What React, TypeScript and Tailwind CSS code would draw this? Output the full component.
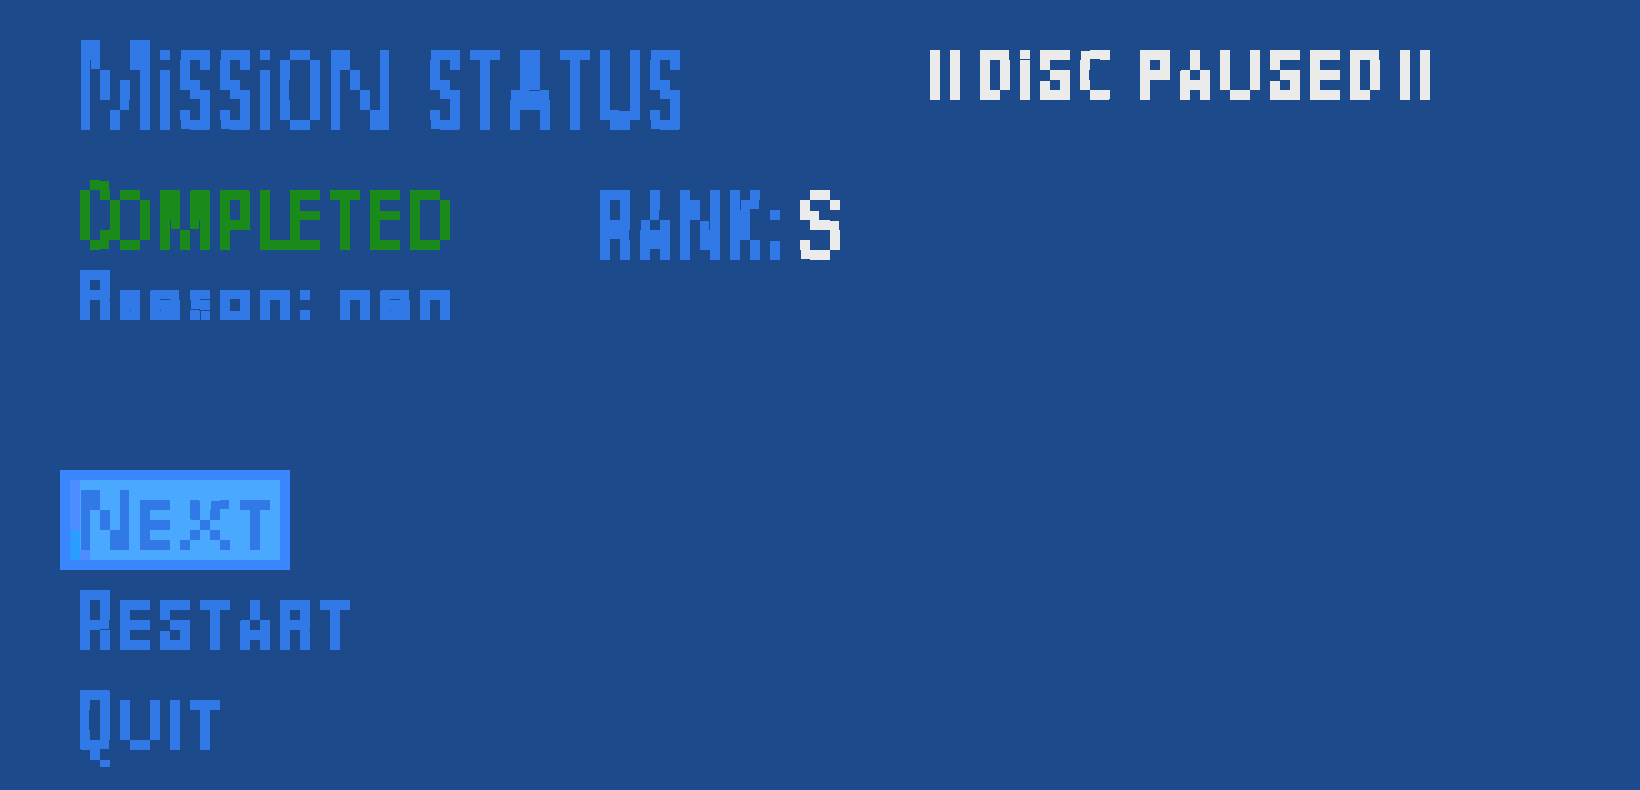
import type { ReactNode } from "react";

const font = "font-['Liberation_Sans',sans-serif] font-bold";

// one letter of the pixel font, w/h is its size on the 10px grid
function G({ c, b, s = "" }: { c: string; b: string; s?: string }) {
  return (
    <span className={`flex shrink-0 items-center justify-center whitespace-pre leading-none ${b}`}>
      <span className={`block ${s}`}>{c}</span>
    </span>
  );
}

function Row({ className, children }: { className: string; children: ReactNode }) {
  return <div className={`flex items-end gap-[10px] ${font} ${className}`}>{children}</div>;
}

function Filters() {
  const colors: [string, string][] = [
    ["px-blue", "#3279e8"],
    ["px-green", "#1a8a1a"],
    ["px-white", "#ebebeb"],
  ];
  return (
    <svg className="absolute h-0 w-0">
      {colors.map(([id, color]) => (
        <filter key={id} id={id} x="0" y="0" width="1" height="1" colorInterpolationFilters="sRGB">
          <feFlood x="4" y="4" width="2" height="2" />
          <feComposite width="10" height="10" />
          <feTile result="grid" />
          <feComposite in="SourceGraphic" in2="grid" operator="in" />
          <feMorphology operator="dilate" radius="4" />
          <feComponentTransfer result="mask">
            <feFuncA type="discrete" tableValues="0 1" />
          </feComponentTransfer>
          <feFlood floodColor={color} />
          <feComposite in2="mask" operator="in" />
        </filter>
      ))}
    </svg>
  );
}

export default function App() {
  return (
    <div className="relative flex h-[790px] w-[1640px] flex-col overflow-hidden bg-[#1d4a8b] pt-[40px]">
      <Filters />

      <div className="ml-[80px] flex items-start">
        <Row className="h-[90px] text-[112px] text-[#3279e8] [filter:url(#px-blue)]">
          <G c="M" b="h-[90px] w-[70px] text-[126px] font-normal" s="scale-x-[0.72]" />
          <G c="i" b="h-[80px] w-[10px]" s="scale-x-[0.63]" />
          <G c="S" b="h-[80px] w-[30px]" s="scale-x-[0.48]" />
          <G c="S" b="h-[80px] w-[30px]" s="scale-x-[0.48]" />
          <G c="i" b="h-[80px] w-[10px]" s="scale-x-[0.63]" />
          <G c="O" b="h-[80px] w-[40px] font-normal [-webkit-text-stroke:2px]" s="scale-x-[0.55]" />
          <G c="N" b="h-[80px] w-[60px] font-normal" s="scale-x-[0.8]" />
          <G c=" " b="h-[80px] w-[20px]" />
          <G c="S" b="h-[80px] w-[30px]" s="scale-x-[0.48]" />
          <G c="T" b="h-[80px] w-[30px]" s="scale-x-[0.53]" />
          <G c="A" b="h-[80px] w-[40px] [-webkit-text-stroke:2px]" s="scale-x-[0.56]" />
          <G c="T" b="h-[80px] w-[30px]" s="scale-x-[0.53]" />
          <G c="U" b="h-[80px] w-[40px]" s="scale-x-[0.57]" />
          <G c="S" b="h-[80px] w-[30px]" s="scale-x-[0.48]" />
        </Row>

        <Row className="ml-[250px] mt-[10px] h-[50px] text-[70px] text-[#ebebeb] [filter:url(#px-white)]">
          <G c="|" b="h-[50px] w-[10px] text-[54px]" s="-translate-y-[5px]" />
          <G c="|" b="h-[50px] w-[10px] text-[54px]" s="-translate-y-[5px]" />
          <G c=" " b="h-[50px] w-0" />
          <G c="D" b="h-[50px] w-[30px]" s="scale-x-[0.7]" />
          <G c="i" b="h-[50px] w-[10px]" s="scale-x-[1]" />
          <G c="S" b="h-[50px] w-[30px]" s="scale-x-[0.76]" />
          <G c="C" b="h-[50px] w-[30px] font-normal" s="scale-x-[0.66]" />
          <G c=" " b="h-[50px] w-[10px]" />
          <G c="P" b="h-[50px] w-[30px]" s="scale-x-[0.76]" />
          <G c="A" b="h-[50px] w-[30px] [-webkit-text-stroke:4px]" s="scale-x-[0.62]" />
          <G c="U" b="h-[50px] w-[40px]" s="scale-x-[0.9]" />
          <G c="S" b="h-[50px] w-[30px]" s="scale-x-[0.76]" />
          <G c="E" b="h-[50px] w-[30px]" s="scale-x-[0.76]" />
          <G c="D" b="h-[50px] w-[30px]" s="scale-x-[0.7]" />
          <G c=" " b="h-[50px] w-0" />
          <G c="|" b="h-[50px] w-[10px] text-[54px]" s="-translate-y-[5px]" />
          <G c="|" b="h-[50px] w-[10px] text-[54px]" s="-translate-y-[5px]" />
        </Row>
      </div>

      <div className="ml-[80px] mt-[50px] flex items-start">
        <div className="flex w-[370px] flex-col gap-[20px]">
          <Row className="h-[70px] text-[84px] text-[#1a8a1a] [filter:url(#px-green)]">
            <G c="C" b="h-[70px] w-[30px] text-[98px]" s="scale-x-[0.42]" />
            <G c="O" b="-ml-[10px] h-[60px] w-[40px]" s="scale-x-[0.66]" />
            <G c="M" b="h-[60px] w-[50px]" s="scale-x-[0.78]" />
            <G c="P" b="h-[60px] w-[30px]" s="scale-x-[0.64]" />
            <G c="L" b="h-[60px] w-[30px]" s="scale-x-[0.6]" />
            <G c="E" b="-ml-[10px] h-[60px] w-[30px]" s="scale-x-[0.6]" />
            <G c="T" b="h-[60px] w-[30px]" s="scale-x-[0.7]" />
            <G c="E" b="h-[60px] w-[30px]" s="scale-x-[0.64]" />
            <G c="D" b="h-[60px] w-[40px]" s="scale-x-[0.76]" />
          </Row>
          <Row className="h-[60px] items-start text-[58px] text-[#3279e8] [filter:url(#px-blue)]">
            <G c="R" b="h-[50px] w-[30px] text-[70px]" s="scale-x-[0.7]" />
            <G c="e" b="mt-[20px] h-[30px] w-[20px] font-normal" s="-translate-y-[5px] scale-x-[0.7]" />
            <G c="a" b="mt-[20px] h-[30px] w-[30px]" s="-translate-y-[5px] scale-x-[0.9]" />
            <G c="s" b="mt-[20px] h-[30px] w-[20px] font-normal" s="-translate-y-[5px] scale-x-[0.8]" />
            <G c="o" b="mt-[20px] h-[30px] w-[30px]" s="-translate-y-[5px] scale-x-[1]" />
            <G c="n" b="mt-[20px] h-[30px] w-[30px]" s="-translate-y-[5px] scale-x-[1]" />
            <G c=":" b="mt-[20px] h-[30px] w-[10px]" s="-translate-y-[5px] scale-x-[0.8]" />
            <G c=" " b="h-[30px] w-[10px]" />
            <G c="n" b="mt-[20px] h-[30px] w-[30px]" s="-translate-y-[5px] scale-x-[1]" />
            <G c="a" b="mt-[20px] h-[30px] w-[30px]" s="-translate-y-[5px] scale-x-[0.9]" />
            <G c="n" b="mt-[20px] h-[30px] w-[30px]" s="-translate-y-[5px] scale-x-[1]" />
          </Row>
        </div>

        <div className="ml-[150px] mt-[10px] flex gap-[20px]">
          <Row className="h-[70px] text-[98px] text-[#3279e8] [filter:url(#px-blue)]">
            <G c="R" b="h-[70px] w-[30px] [-webkit-text-stroke:4px]" s="scale-x-[0.46]" />
            <G c="A" b="h-[70px] w-[30px] [-webkit-text-stroke:5px]" s="scale-x-[0.46]" />
            <G c="N" b="h-[70px] w-[40px]" s="scale-x-[0.62]" />
            <G c="K" b="h-[70px] w-[30px] [-webkit-text-stroke:3px]" s="scale-x-[0.46]" />
            <G c=":" b="h-[70px] w-[10px]" s="scale-x-[0.6]" />
          </Row>
          <Row className="h-[70px] text-[98px] text-[#ebebeb] [filter:url(#px-white)]">
            <G c=" " b="h-[70px] w-0" />
            <G c="S" b="-ml-[10px] h-[70px] w-[40px]" s="scale-x-[0.66]" />
          </Row>
        </div>
      </div>

      <div className="ml-[60px] mt-[140px] flex flex-col items-start">
        <button className="relative flex h-[100px] w-[230px] border-[10px] border-[#3a86ff] bg-[#4aa8ff]">
          <span className="flex w-[10px] flex-col">
            <span className="h-[50px] bg-[#4c8dff]" />
            <span className="h-[30px] bg-[#2a9dff]" />
          </span>
          <span className="absolute bottom-0 left-[10px] h-[10px] w-[10px] bg-[#4c8dff]" />
          <Row className="mt-[10px] h-[60px] text-[84px] text-[#3279e8] [filter:url(#px-blue)]">
            <G c="N" b="h-[60px] w-[50px]" s="scale-x-[0.8]" />
            <G c="E" b="h-[50px] w-[30px] text-[70px]" s="scale-x-[0.76]" />
            <G c="X" b="h-[50px] w-[50px] text-[70px] font-normal [-webkit-text-stroke:1px]" s="scale-x-[1.1]" />
            <G c="T" b="h-[50px] w-[30px] text-[70px]" s="scale-x-[0.84]" />
          </Row>
        </button>

        <Row className="ml-[20px] mt-[20px] h-[60px] text-[70px] text-[#3279e8] [filter:url(#px-blue)]">
          <G c="R" b="h-[60px] w-[30px] text-[84px] [-webkit-text-stroke:2px]" s="scale-x-[0.56]" />
          <G c="E" b="h-[50px] w-[30px]" s="scale-x-[0.76]" />
          <G c="S" b="h-[50px] w-[30px]" s="scale-x-[0.76]" />
          <G c="T" b="h-[50px] w-[30px]" s="scale-x-[0.84]" />
          <G c="A" b="h-[50px] w-[30px] [-webkit-text-stroke:4px]" s="scale-x-[0.62]" />
          <G c="R" b="h-[50px] w-[30px]" s="scale-x-[0.7]" />
          <G c="T" b="h-[50px] w-[30px]" s="scale-x-[0.84]" />
        </Row>

        <Row className="ml-[20px] mt-[40px] h-[70px] items-start text-[70px] text-[#3279e8] [filter:url(#px-blue)]">
          <G c="Q" b="h-[60px] w-[30px] text-[84px]" s="scale-x-[0.6]" />
          <G c="U" b="mt-[10px] h-[50px] w-[40px]" s="scale-x-[0.9]" />
          <G c="I" b="mt-[10px] h-[50px] w-[10px]" s="scale-x-[1]" />
          <G c="T" b="mt-[10px] h-[50px] w-[30px]" s="scale-x-[0.84]" />
        </Row>
      </div>
    </div>
  );
}
